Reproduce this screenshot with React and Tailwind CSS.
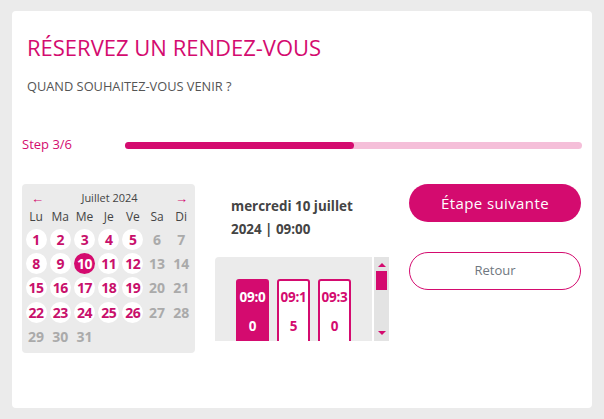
import React from "react";

const PINK = "#d40b6f";

function Calendar() {
  const days = ["Lu", "Ma", "Me", "Je", "Ve", "Sa", "Di"];
  const cells = [];
  for (let d = 1; d <= 31; d++) cells.push(d);
  const isWeekend = (d) => {
    const idx = (d - 1) % 7;
    return idx >= 5;
  };
  return (
    <div className="w-[173px] h-[169px] bg-[#ebebeb] rounded-[4px] pl-[2px] pt-[5px] shrink-0">
      <div className="flex items-center justify-between h-[18px] px-[7px] text-[11px] text-[#444]">
        <span className="text-[#d40b6f] text-[13px] leading-none">←</span>
        <span>Juillet 2024</span>
        <span className="text-[#d40b6f] text-[13px] leading-none">→</span>
      </div>
      <div className="grid grid-cols-[repeat(7,24.2px)] text-[12px] text-[#444] h-[20px] items-center">
        {days.map((d) => (
          <div key={d} className="text-center">{d}</div>
        ))}
      </div>
      <div className="grid grid-cols-[repeat(7,24.2px)] auto-rows-[24.4px]">
        {cells.map((d) => {
          const selected = d === 10;
          const disabled = d > 26 || isWeekend(d);
          return (
            <div key={d} className="flex items-center justify-center">
              {disabled ? (
                <span className="text-[14px] font-bold text-[#aaa]">{d}</span>
              ) : (
                <span
                  className={
                    "w-[21px] h-[21px] rounded-full flex items-center justify-center text-[14px] font-bold tracking-[-0.5px] " +
                    (selected ? "bg-[#d40b6f] text-white" : "bg-white text-[#c8106b]")
                  }
                >
                  {d}
                </span>
              )}
            </div>
          );
        })}
      </div>
    </div>
  );
}

function Slot({ top, bottom, active }) {
  return (
    <div
      className={
        "w-[33px] h-[72px] rounded-[3px] border-2 border-[#d40b6f] flex flex-col items-center pt-[6px] text-[13.5px] font-bold tracking-[-0.3px] " +
        (active ? "bg-[#d40b6f] text-white" : "bg-white text-[#d40b6f]")
      }
    >
      <span className="leading-[20px]">{top}</span>
      <span className="leading-[20px] mt-[9px]">{bottom}</span>
    </div>
  );
}

function TimePanel() {
  return (
    <div className="flex gap-[2px] h-[84px]">
      <div className="w-[157px] h-[84px] bg-[#ebebeb] rounded-tl-[4px] overflow-hidden pl-[21px] pt-[22px]">
        <div className="flex gap-[8px]">
          <Slot top="09:0" bottom="0" active />
          <Slot top="09:1" bottom="5" />
          <Slot top="09:3" bottom="0" />
        </div>
      </div>
      <div className="w-[15px] h-[84px] bg-[#e3e3e3] flex flex-col items-center">
        <svg width="8" height="8" viewBox="0 0 8 8" className="mt-[4px]">
          <path d="M0 6 L4 2 L8 6 Z" fill={PINK} />
        </svg>
        <div className="w-[11px] h-[19px] bg-[#d40b6f] mt-[2px]" />
        <div className="flex-1" />
        <svg width="8" height="8" viewBox="0 0 8 8" className="mb-[4px]">
          <path d="M0 2 L8 2 L4 6 Z" fill={PINK} />
        </svg>
      </div>
    </div>
  );
}

export default function App() {
  return (
    <div
      className="w-[604px] h-[419px] bg-[#ebebeb] pt-[11px] pl-[12px]"
      style={{ fontFamily: "'Open Sans', 'Noto Sans', sans-serif" }}
    >
      <div className="w-[580px] h-[397px] bg-white rounded-[4px] pl-[10px] pr-[11px] pt-[21px]">
        <div className="pl-[5px]">
          <h1 className="text-[22px] leading-[30px] text-[#d40b6f] font-normal">RÉSERVEZ UN RENDEZ-VOUS</h1>
          <p className="text-[12.8px] leading-[18px] text-[#555] mt-[15px]">QUAND SOUHAITEZ-VOUS VENIR ?</p>
        </div>
        <div className="flex items-center mt-[40px] h-[20px]">
          <span className="w-[103px] text-[13px] text-[#d40b6f]">Step 3/6</span>
          <div className="flex-1 h-[7px] rounded-full bg-[#f5bfd9] mr-[-1px]">
            <div className="w-[229px] h-[7px] rounded-full bg-[#d40b6f]" />
          </div>
        </div>
        <div className="flex mt-[29px]">
          <Calendar />
          <div className="ml-[20px] w-[174px]">
            <div className="pl-[16px] pt-[11px] text-[13.4px] font-bold text-[#444] leading-[23px]">
              <div>mercredi 10 juillet</div>
              <div>2024 | 09:00</div>
            </div>
            <div className="mt-[16px]">
              <TimePanel />
            </div>
          </div>
          <div className="ml-[20px] w-[172px] flex flex-col">
            <button className="h-[38px] w-[172px] rounded-full bg-[#d40b6f] text-white text-[15px] tracking-[0.4px]">
              Étape suivante
            </button>
            <button className="h-[38px] w-[172px] rounded-full border border-[#d40b6f] bg-white text-[#6f7780] text-[13px] mt-[30px]">
              Retour
            </button>
          </div>
        </div>
      </div>
    </div>
  );
}
